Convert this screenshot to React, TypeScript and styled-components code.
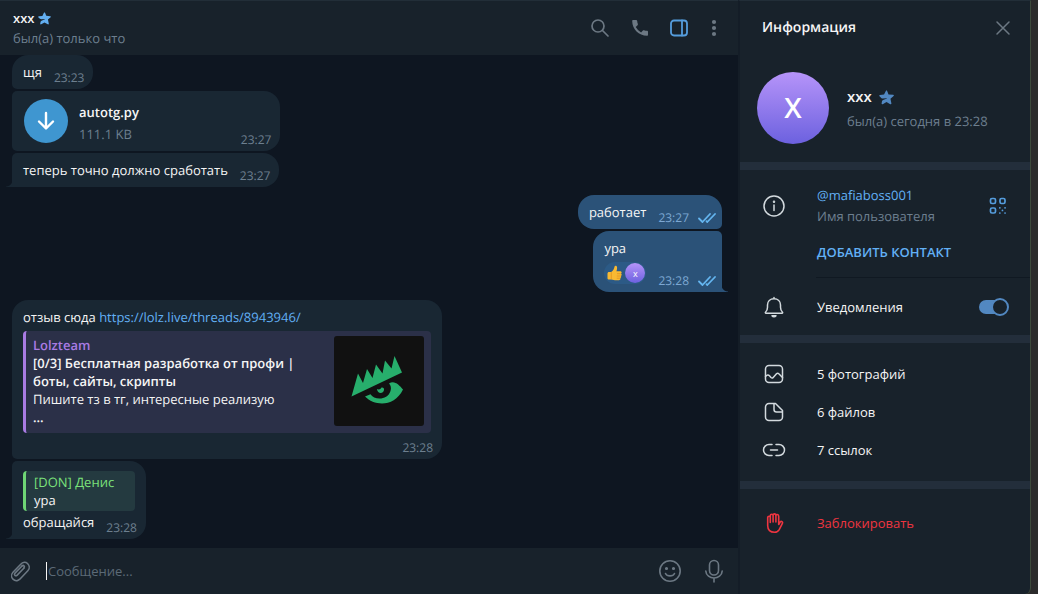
import React from "react";
import styled, { createGlobalStyle, css } from "styled-components";

const colors = {
  panel: "#18222b",
  chat: "#0e1621",
  bubbleIn: "#192733",
  bubbleOut: "#2b5278",
  text: "#f5f5f5",
  muted: "#6d7f8f",
  link: "#62b0f5",
  icon: "#6c7883",
  rowIcon: "#d3dade",
  accent: "#5288c1",
  bright: "#559ddd",
  divider: "#232e3b",
  danger: "#ee3540",
};

const GlobalStyle = createGlobalStyle`
  *, *::before, *::after { box-sizing: border-box; }
  body {
    margin: 0;
    background: #2b2b2b;
    color: ${colors.text};
    font: 13px/18px "Open Sans", "Noto Sans", sans-serif;
    text-rendering: geometricPrecision;
  }
  h1, h2, h3, p, ul { margin: 0; padding: 0; font: inherit; }
  button, input { font: inherit; color: inherit; }
  a { color: ${colors.link}; text-decoration: none; }
  svg { display: block; flex: none; }
`;

const Shell = styled.div`
  display: flex;
  min-height: 100vh;
  padding-right: 7px;
`;

const Chat = styled.main`
  flex: 1;
  min-width: 0;
  display: flex;
  flex-direction: column;
  background: ${colors.chat};
`;

const ChatHeader = styled.header`
  display: flex;
  align-items: center;
  justify-content: space-between;
  height: 55px;
  padding: 0 18px 0 13px;
  background: ${colors.panel};
  border-top: 1px solid #222e38;
`;

const Name = styled.h1<{ $large?: boolean }>`
  display: flex;
  align-items: center;
  gap: ${(p) => (p.$large ? 7 : 4)}px;
  font-size: ${(p) => (p.$large ? 15 : 13)}px;
  font-weight: 600;
  line-height: 20px;
`;

const Status = styled.p`
  color: ${colors.muted};
  line-height: 20px;
`;

const Tools = styled.div`
  display: flex;
  align-items: center;
  gap: 20px;
`;

const IconButton = styled.button<{ $color?: string }>`
  display: flex;
  padding: 0;
  border: 0;
  background: none;
  color: ${(p) => p.$color ?? colors.icon};
  cursor: pointer;
`;

const Messages = styled.section`
  flex: 1;
  display: flex;
  flex-direction: column;
  justify-content: flex-end;
  gap: 8px;
  padding: 0 16px 9px 12px;
`;

const Group = styled.div<{ $out?: boolean }>`
  display: flex;
  flex-direction: column;
  align-items: ${(p) => (p.$out ? "flex-end" : "flex-start")};
  gap: 2px;
`;

type Place = "first" | "middle" | "last";

const tail = css<{ $out?: boolean }>`
  &::after {
    content: "";
    position: absolute;
    bottom: 0;
    width: 6px;
    height: 7px;
    ${(p) =>
      p.$out
        ? `right: -6px; background: radial-gradient(circle at 100% 0, transparent 6px, ${colors.bubbleOut} 7px);`
        : `left: -6px; background: radial-gradient(circle at 0 0, transparent 6px, ${colors.bubbleIn} 7px);`}
  }
`;

const corners = (place: Place, out?: boolean) => {
  const top = place === "first" ? 16 : 5;
  const bottom = place === "last" ? 0 : 5;
  return out ? `16px ${top}px ${bottom}px 16px` : `${top}px 16px 16px ${bottom}px`;
};

const Bubble = styled.article<{ $place: Place; $out?: boolean }>`
  position: relative;
  max-width: 430px;
  padding: 8px ${(p) => (p.$out ? 6 : 9)}px 4px 11px;
  background: ${(p) => (p.$out ? colors.bubbleOut : colors.bubbleIn)};
  border-radius: ${(p) => corners(p.$place, p.$out)};
  ${(p) => p.$place === "last" && tail}
`;

const Line = styled.div`
  display: flex;
  align-items: flex-end;
  justify-content: space-between;
  gap: 12px;
`;

const Body = styled.div`
  padding-bottom: 4px;
`;

const Stamp = styled.div<{ $out?: boolean }>`
  display: flex;
  flex: none;
  align-items: center;
  justify-content: flex-end;
  gap: 9px;
  color: ${(p) => (p.$out ? "#7da8d3" : colors.muted)};
  font-size: 12px;
  line-height: 14px;
`;

const FileBubble = styled(Bubble)`
  display: flex;
  align-items: flex-end;
`;

const FileRow = styled.div`
  display: flex;
  align-items: center;
  gap: 11px;
  padding: 0 102px 4px 1px;
`;

const FileText = styled.div`
  padding-top: 4px;
`;

const Download = styled.button`
  display: grid;
  place-items: center;
  width: 44px;
  height: 44px;
  padding: 0;
  border: 0;
  border-radius: 50%;
  background: #3f96d0;
  color: #fff;
  cursor: pointer;
`;

const Strong = styled.p`
  font-weight: 600;
`;

const FileSize = styled.p`
  margin-top: 4px;
  color: ${colors.muted};
`;

const Preview = styled.section`
  display: flex;
  gap: 10px;
  width: 408px;
  max-width: 100%;
  margin: 5px 2px 8px 0;
  padding: 5px 7px 7px;
  background: #2b3048;
  border-left: 3px solid #a97be3;
  border-radius: 4px;
`;

const PreviewText = styled.div`
  flex: 1;
  min-width: 0;
`;

const SiteName = styled(Strong)`
  color: #a97be3;
`;

const Reply = styled.blockquote`
  margin: 2px 2px 2px 0;
  padding: 2px 8px;
  background: #243a40;
  border-left: 3px solid #6fd575;
  border-radius: 4px;
`;

const ReplyName = styled.p`
  color: #7be27b;
  font-weight: 500;
`;

const Reaction = styled.button`
  display: flex;
  align-items: center;
  gap: 3px;
  margin: 5px 0 4px;
  height: 22px;
  padding: 0 1px 0 3px;
  border: 0;
  border-radius: 11px;
  background: #2c5a86;
`;

const Avatar = styled.span<{ $size: number }>`
  display: grid;
  place-items: center;
  flex: none;
  width: ${(p) => p.$size}px;
  height: ${(p) => p.$size}px;
  border-radius: 50%;
  background: linear-gradient(#b694f9, #6c61df);
  color: #fff;
  font-size: ${(p) => (p.$size > 40 ? 28 : 9)}px;
  font-weight: ${(p) => (p.$size > 40 ? 600 : 400)};
  line-height: 1;
`;

const Composer = styled.form`
  display: flex;
  align-items: center;
  height: 46px;
  padding: 0 14px 0 9px;
  background: ${colors.panel};
`;

const Caret = styled.span`
  width: 1px;
  height: 18px;
  margin-left: 15px;
  background: #f5f5f5;
`;

const MessageInput = styled.input`
  flex: 1;
  min-width: 0;
  padding: 0 0 0 1px;
  border: 0;
  outline: 0;
  background: none;
  &::placeholder { color: #5c6a77; opacity: 1; }
`;

const ComposerTools = styled(Tools)`
  gap: 22px;
`;

const Info = styled.aside`
  width: 293px;
  flex: none;
  background: ${colors.panel};
  border-top: 1px solid #222e38;
  border-left: 2px solid #141d27;
  border-right: 1px solid #3d4a3c;
  border-bottom-right-radius: 6px;
`;

const InfoHeader = styled.header`
  display: flex;
  align-items: center;
  justify-content: space-between;
  height: 54px;
  padding: 0 19px 0 22px;
`;

const InfoTitle = styled.h2`
  font-size: 14px;
  font-weight: 600;
`;

const Profile = styled.div`
  display: flex;
  align-items: center;
  gap: 18px;
  padding: 17px 17px 18px;
`;

const ProfileText = styled.div`
  display: grid;
  gap: 4px;
  padding-top: 2px;
  line-height: 20px;
`;

const Section = styled.section<{ $pad: string }>`
  border-top: 8px solid ${colors.divider};
  padding: ${(p) => p.$pad};
`;

const InfoRow = styled.div<{ $height: number }>`
  display: grid;
  grid-template-columns: 55px 1fr auto;
  align-items: center;
  height: ${(p) => p.$height}px;
  padding: 0 23px 0 22px;
  > svg { color: ${colors.rowIcon}; }
`;

const Label = styled.p`
  margin-top: 3px;
  color: ${colors.muted};
`;

const AddContact = styled.button`
  display: block;
  margin: 9px 0 16px 77px;
  padding: 0;
  border: 0;
  background: none;
  color: ${colors.link};
  font-weight: 600;
  cursor: pointer;
`;

const Rule = styled.hr`
  height: 1px;
  margin: 0 0 0 76px;
  border: 0;
  background: #101922;
`;

const Toggle = styled.input`
  appearance: none;
  position: relative;
  width: 30px;
  height: 18px;
  margin: 0;
  cursor: pointer;
  &::before {
    content: "";
    position: absolute;
    inset: 2px 4px 2px 0;
    border-radius: 7px;
    background: ${colors.accent};
  }
  &::after {
    content: "";
    position: absolute;
    top: 0;
    left: 0;
    width: 18px;
    height: 18px;
    border: 2px solid ${colors.accent};
    border-radius: 50%;
    background: ${colors.panel};
  }
  &:checked::after { left: 12px; }
`;

const ToggleRow = styled(InfoRow)`
  padding-right: 21px;
`;

const MediaLink = styled.button<{ $danger?: boolean }>`
  display: grid;
  grid-template-columns: 55px 1fr;
  align-items: center;
  width: 100%;
  height: 38px;
  padding: 0 22px;
  border: 0;
  background: none;
  color: ${(p) => (p.$danger ? colors.danger : colors.text)};
  text-align: left;
  cursor: pointer;
  > svg { color: ${(p) => (p.$danger ? colors.danger : colors.rowIcon)}; }
`;

type DrawProps = { w: number; h: number; sw?: number; children: React.ReactNode };

const Draw = ({ w, h, sw = 1.5, children }: DrawProps) => (
  <svg width={w} height={h} viewBox={`0 0 ${w} ${h}`} fill="none" stroke="currentColor" strokeWidth={sw} strokeLinecap="round" strokeLinejoin="round" aria-hidden="true">
    {children}
  </svg>
);

const StarIcon = ({ size, color }: { size: number; color: string }) => (
  <svg width={size} height={size} viewBox="0 0 14 14" aria-hidden="true">
    <path fill={color} d="M6.4.9c.2-.6 1-.6 1.2 0l1.3 3.2 4.3.4c.7.1.9.8.4 1.2l-2.900 2.500.9 4.300c.1.7-.5 1.100-1.100.8L7 11.200l-3.500 2.100c-.6.3-1.200-.1-1.100-.8l.4-2c.1-.5.5-.9 1-1.100l3.600-1.500c.2-.1.1-.3-.1-.3l-3.800.3c-.6 0-1-.1-1.400-.5L.5 5.900c-.5-.4-.3-1.200.4-1.300l3.800-.4z" />
  </svg>
);

const Checks = () => (
  <Draw w={18} h={10} sw={1.800}>
    <path d="M1 5.500 4.500 9 12 1M8.500 8.200l.8.8L17 1" stroke="#64b5ef" />
  </Draw>
);

const ThumbsUp = () => (
  <svg width="15" height="16" viewBox="0 0 15 16" aria-hidden="true">
    <path fill="#f9b932" d="M.5 8.500C.5 7.600 1.200 7 2 7h2.200C6 5.700 7.200 4 7.500 1.700 7.700.5 9.700.300 10 2c.3 1.400-.1 3-.6 4.200h3.800c1.600 0 1.900 1.800.8 2.400 1 .7.800 2-.1 2.300.6.800.3 1.900-.6 2.200.4.9-.1 2-1.400 2.100-2.500.2-5.500.2-7.400-.6H2c-.9 0-1.500-.600-1.500-1.400z" />
    <path d="M10 8.700h3.600M9.800 11h3.900M9.700 13.200h3.200M4.300 7.200v6.900" fill="none" stroke="#dc8c1d" strokeWidth=".7" />
  </svg>
);

const EyeLogo = () => (
  <svg width="90" height="90" viewBox="0 0 90 90" role="img" aria-label="Lolzteam">
    <rect width="90" height="90" rx="3" fill="#111" />
    <path fill="#27ae6c" d="M17.500 60.500 24 37.500l5 9.500L33 33l5.500 9 3.500-13.500 6.500 9L51 24.500l6.500 8L60.500 20 68 36.500z" />
    <path fill="#27ae6c" d="M31 60.500l5.500-2.300c3.500 6 17 6.500 20-3.200 1-3.500.3-5.500-1.500-7.500 5.500-3.500 10 1.500 14 6C60.500 71 41 70.500 31 60.500z" />
    <path fill="#27ae6c" d="M43 53c2 1 3.500.5 4.500-1.500 1.800-.3 2.900.8 2.500 2.500-.6 4-6.600 4.300-7-1z" />
  </svg>
);

export default function App() {
  return (
    <>
      <GlobalStyle />
      <Shell>
        <Chat>
          <ChatHeader>
            <div>
              <Name>xxx <StarIcon size={13} color="#62aef0" /></Name>
              <Status>был(а) только что</Status>
            </div>
            <Tools>
              <IconButton aria-label="Поиск">
                <Draw w={20} h={20} sw={1.700}><circle cx="8" cy="8" r="6" /><path d="m12.500 12.500 5.500 5.500" /></Draw>
              </IconButton>
              <IconButton aria-label="Позвонить">
                <svg width="20" height="20" viewBox="0 0 20 20" fill="currentColor" aria-hidden="true">
                  <path d="M3.200 2h2.900c.6 0 1 .4 1.100.9.1 1.100.3 2.200.7 3.200.1.400 0 .8-.3 1.100L5.700 9.100a13 13 0 0 0 5.400 5.300l1.800-1.900c.3-.3.700-.4 1.100-.3 1 .3 2.100.5 3.200.6.5.1.8.5.8 1v2.900c0 .6-.4 1.100-1 1.100C8.900 17.800 2.200 11.100 2.200 3c0-.6.4-1 1-1z" />
                </svg>
              </IconButton>
              <IconButton aria-label="Информация" $color={colors.bright}>
                <Draw w={18} h={18} sw={1.800}><rect x="1" y="1.500" width="16" height="15" rx="3" /><path d="M12 1.500v15" /></Draw>
              </IconButton>
              <IconButton aria-label="Меню">
                <svg width="12" height="18" viewBox="0 0 12 18" fill="currentColor" aria-hidden="true">
                  <circle cx="6" cy="3" r="2.100" /><circle cx="6" cy="9" r="2.100" /><circle cx="6" cy="15" r="2.100" />
                </svg>
              </IconButton>
            </Tools>
          </ChatHeader>

          <Messages>
            <Group>
              <Bubble $place="first">
                <Line><Body>щя</Body><Stamp>23:23</Stamp></Line>
              </Bubble>
              <FileBubble $place="middle">
                <FileRow>
                  <Download aria-label="Скачать">
                    <Draw w={20} h={20} sw={2.400}><path d="M10 2v15M3 10.500l7 7 7-7" /></Draw>
                  </Download>
                  <FileText>
                    <Strong>autotg.py</Strong>
                    <FileSize>111.1 KB</FileSize>
                  </FileText>
                </FileRow>
                <Stamp>23:27</Stamp>
              </FileBubble>
              <Bubble $place="last">
                <Line><Body>теперь точно должно сработать</Body><Stamp>23:27</Stamp></Line>
              </Bubble>
            </Group>

            <Group $out>
              <Bubble $out $place="first">
                <Line><Body>работает</Body><Stamp $out>23:27<Checks /></Stamp></Line>
              </Bubble>
              <Bubble $out $place="last">
                <Line>
                  <div>
                    <p>ура</p>
                    <Reaction aria-label="Реакция"><ThumbsUp /><Avatar $size={20}>x</Avatar></Reaction>
                  </div>
                  <Stamp $out>23:28<Checks /></Stamp>
                </Line>
              </Bubble>
            </Group>

            <Group>
              <Bubble $place="first">
                <p>отзыв сюда <a href="https://lolz.live/threads/8943946/">https://lolz.live/threads/8943946/</a></p>
                <Preview>
                  <PreviewText>
                    <SiteName>Lolzteam</SiteName>
                    <Strong>[0/3] Бесплатная разработка от профи | боты, сайты, скрипты</Strong>
                    <p>Пишите тз в тг, интересные реализую</p>
                    <Strong>...</Strong>
                  </PreviewText>
                  <EyeLogo />
                </Preview>
                <Stamp>23:28</Stamp>
              </Bubble>
              <Bubble $place="last">
                <Reply>
                  <ReplyName>[DON] Денис</ReplyName>
                  <p>ура</p>
                </Reply>
                <Line><Body>обращайся</Body><Stamp>23:28</Stamp></Line>
              </Bubble>
            </Group>
          </Messages>

          <Composer>
            <IconButton type="button" aria-label="Прикрепить">
              <Draw w={22} h={24} sw={1.600}>
                <path d="M11.500 5.500 4 13.200c-3.400 3.600 0 7 0 7 3.400 3.200 6.800 0 6.800 0l8-8.400c2.600-2.700 1.200-5.800-.3-7.300-1.600-1.500-4.500-2-7 .9M14.800 9.200l-6.600 6.900c-1.700 1.600-3.700-.3-2.200-2L13 7" />
                <path d="M13 7c1.300-1.300 3.400.4 1.800 2.200" />
              </Draw>
            </IconButton>
            <Caret />
            <MessageInput aria-label="Сообщение" placeholder="Сообщение..." />
            <ComposerTools>
              <IconButton type="button" aria-label="Эмодзи">
                <Draw w={24} h={24} sw={1.600}>
                  <circle cx="12" cy="12" r="10.200" /><path d="M7.500 14.500c1.500 3.200 7.500 3.200 9 0" />
                  <circle cx="8.500" cy="9.500" r=".8" fill="currentColor" /><circle cx="15.500" cy="9.500" r=".8" fill="currentColor" />
                </Draw>
              </IconButton>
              <IconButton type="button" aria-label="Голосовое сообщение">
                <Draw w={20} h={24} sw={1.600}>
                  <rect x="5.500" y="1.500" width="9" height="14.500" rx="4.500" /><path d="M1.800 12c.5 9.300 15.900 9.300 16.400 0M10 19v4" />
                </Draw>
              </IconButton>
            </ComposerTools>
          </Composer>
        </Chat>

        <Info>
          <InfoHeader>
            <InfoTitle>Информация</InfoTitle>
            <IconButton aria-label="Закрыть">
              <Draw w={16} h={16} sw={1.500}><path d="m2 2 12 12M14 2 2 14" /></Draw>
            </IconButton>
          </InfoHeader>
          <Profile>
            <Avatar $size={72}>X</Avatar>
            <ProfileText>
              <Name as="h2" $large>xxx <StarIcon size={15} color={colors.accent} /></Name>
              <Status>был(а) сегодня в 23:28</Status>
            </ProfileText>
          </Profile>

          <Section $pad="7px 0 0">
            <InfoRow $height={57}>
              <Draw w={24} h={24}>
                <circle cx="12" cy="12" r="10" /><path d="M12 11v5.500" /><circle cx="12" cy="7.700" r=".5" fill="currentColor" />
              </Draw>
              <div>
                <p><a href="#mafiaboss001">@mafiaboss001</a></p>
                <Label>Имя пользователя</Label>
              </div>
              <IconButton aria-label="QR-код" $color={colors.bright}>
                <Draw w={18} h={18} sw={1.700}>
                  <rect x="1.500" y="1.500" width="5" height="5" rx="1.500" /><rect x="11" y="1.500" width="5" height="5" rx="1.500" /><rect x="1.500" y="11" width="5" height="5" rx="1.500" />
                  <path d="M10.800 10.800h.1M16 10.800h.1M13.400 13.400h.1M10.800 16h.1M16 16h.1" />
                </Draw>
              </IconButton>
            </InfoRow>
            <AddContact>ДОБАВИТЬ КОНТАКТ</AddContact>
            <Rule />
            <ToggleRow $height={57}>
              <Draw w={24} h={24}>
                <path d="M12 2.500v1M4 18.200c-.7 0-.9-.8-.4-1.200 1.400-1.300 1.900-2.700 1.900-4.700V10c0-3.700 2.600-6.300 6.500-6.300s6.500 2.600 6.500 6.300v2.300c0 2 .5 3.400 1.900 4.700.5.4.3 1.200-.4 1.200z" /><path d="M10 20.800c1 1.200 3 1.200 4 0z" fill="currentColor" />
              </Draw>
              <label htmlFor="notifications">Уведомления</label>
              <Toggle id="notifications" type="checkbox" defaultChecked />
            </ToggleRow>
          </Section>

          <Section $pad="12px 0">
            <MediaLink>
              <Draw w={24} h={24}><rect x="3.500" y="3.500" width="17" height="17" rx="3.500" /><path d="M3.500 14.500c1.800-2 2.800-2 4.200-.5l1.300 1.500c.8.8 1.500.8 2.200 0l3.300-3.700c.8-.9 1.500-.9 2.300 0l3.700 3.700" /></Draw>
              5 фотографий
            </MediaLink>
            <MediaLink>
              <Draw w={24} h={24}><path d="M7 3.500h6.500l7 7V17a3.500 3.500 0 0 1-3.500 3.500H7A3.500 3.500 0 0 1 3.500 17V7A3.500 3.500 0 0 1 7 3.500zM12 3.500V9.500a2.500 2.500 0 0 0 2.500 2.500h6" /></Draw>
              6 файлов
            </MediaLink>
            <MediaLink>
              <Draw w={24} h={24}><path d="M10 6.500H7a5.500 5.500 0 0 0 0 11h3M14 6.500h3a5.500 5.500 0 0 1 0 11h-3M8.500 12h7" /></Draw>
              7 ссылок
            </MediaLink>
          </Section>

          <Section $pad="15px 0">
            <MediaLink $danger>
              <Draw w={24} h={24} sw={1.600}>
                <path d="M8.300 11.500V4.700M11.100 11V4.300M13.900 11V5M8.300 4.700c0-1.900 2.800-1.900 2.800 0 0-2.500 2.800-2.500 2.800 0 0-1.700 2.800-1.700 2.800.6v8.200l1.500-2.400c1-1.300 3-.4 2.200 1.200l-3.200 6.300c-1 1.800-2.500 2.700-4.600 2.700-4.400 0-6.900-2.300-6.900-6.500V6.500c0-1.700 2.800-1.700 2.600 0" />
              </Draw>
              Заблокировать
            </MediaLink>
          </Section>
        </Info>
      </Shell>
    </>
  );
}
